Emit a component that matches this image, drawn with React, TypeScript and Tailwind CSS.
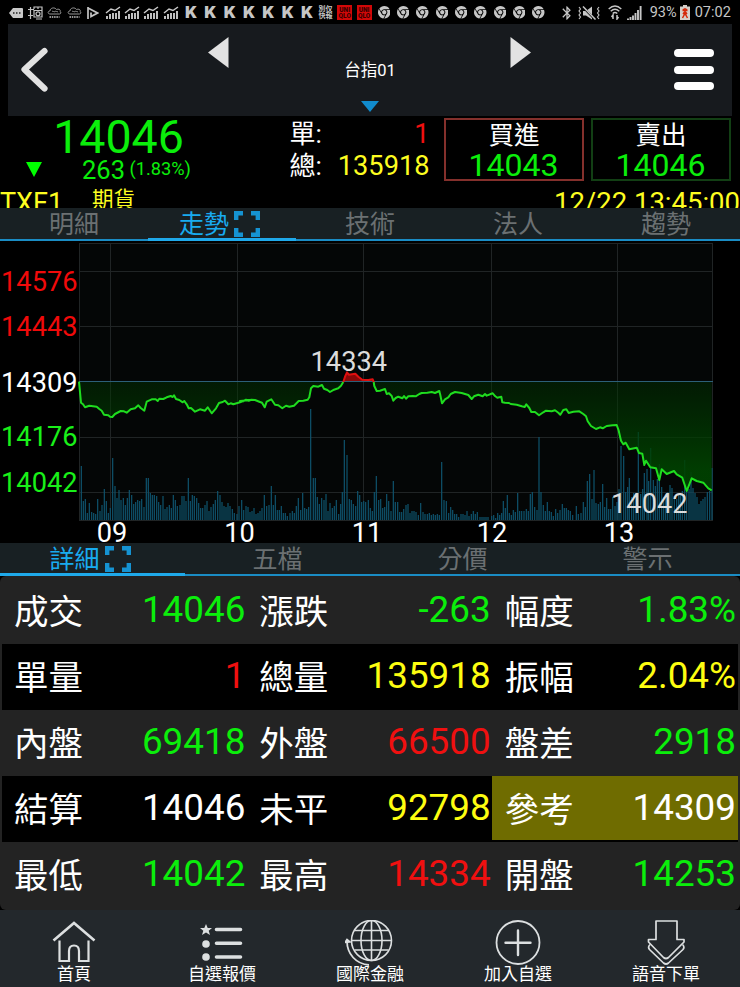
import React from "react";
import { FaChrome } from "react-icons/fa6";
import { MdBluetooth } from "react-icons/md";

type Pt = [number, number];

const FONT = "font-['Roboto','Noto_Sans_CJK_TC',sans-serif]";

/* Samples are recorded in thirds of a pixel, relative to a block origin. */
const scale = (ox: number, oy: number, pts: Pt[]): Pt[] =>
  pts.map(([x, y]) => [ox + x / 3, oy + y / 3]);

const priceMorning = scale(0, -1, [
  [237, 425], [243, 488], [249, 493], [255, 502], [268, 497], [290, 500], [298, 507], [305, 512], [312, 524], [325, 526],
  [330, 530], [337, 531], [345, 522], [362, 513], [372, 514], [380, 518], [392, 508], [405, 505], [415, 496],
  [422, 504], [433, 512], [440, 485], [455, 478], [467, 478], [473, 483], [478, 476], [490, 477], [500, 472],
  [512, 468], [518, 471], [522, 466], [528, 477], [538, 480], [548, 487], [553, 483], [560, 493], [566, 505],
  [573, 504], [585, 515], [600, 508], [615, 512], [623, 502], [635, 520], [648, 505], [657, 489], [668, 486],
  [675, 482], [685, 493], [692, 490], [700, 493], [710, 490], [720, 487], [735, 481], [750, 480],
]);
const priceMid = scale(240, 99, [
  [0, 183], [10, 184], [18, 179], [26, 182], [34, 179], [45, 180], [58, 185], [66, 188], [74, 202], [80, 185], [94, 178],
  [105, 194], [115, 196], [127, 205], [138, 197], [148, 200], [162, 197], [176, 183], [190, 182], [203, 179],
  [208, 172], [213, 145], [220, 138], [235, 140], [246, 135], [252, 146], [262, 150], [270, 156], [282, 149],
  [295, 145], [303, 137], [310, 126],
]);
const pricePeak = scale(240, 99, [
  [310, 126], [315, 110], [321, 97], [326, 104], [346, 101], [355, 110], [367, 119], [385, 120], [398, 118], [401, 126],
]);
const priceNoon = scale(240, 99, [
  [401, 126], [403, 138], [410, 153], [420, 152], [435, 147], [440, 162], [447, 160], [455, 168], [460, 182], [467, 174],
  [475, 170], [487, 175], [492, 168], [498, 176], [505, 169], [518, 168], [527, 169], [538, 162], [545, 159],
  [562, 158], [575, 156], [585, 159], [598, 153], [601, 165], [606, 190], [615, 178], [625, 172], [632, 162],
  [645, 156], [665, 159], [685, 165], [695, 177], [702, 169], [715, 164], [728, 169], [735, 162], [740, 167], [750, 163],
]);
const priceClose = scale(490, 99, [
  [8, 160], [16, 169], [22, 173], [34, 170], [37, 187], [45, 188], [57, 189], [62, 192], [80, 194], [95, 199],
  [104, 201], [109, 193], [118, 204], [124, 216], [135, 216], [147, 226], [160, 217], [168, 212], [185, 214],
  [195, 211], [205, 218], [211, 224], [220, 210], [229, 208], [236, 219], [250, 215], [268, 214], [280, 222],
  [288, 229], [293, 244], [303, 258], [318, 267], [330, 262], [338, 265], [350, 258], [368, 256], [380, 255],
  [386, 272], [393, 302], [400, 313], [407, 308], [418, 328], [440, 323], [447, 339], [457, 341], [463, 375],
  [468, 362], [481, 382], [498, 385], [508, 420], [515, 388], [530, 402], [552, 393], [560, 403], [577, 413],
  [590, 453], [605, 415], [620, 423], [640, 428], [655, 445], [665, 451],
]);

/* Volume: [x in thirds of a pixel, height in pixels] */
const volumes: [number, Pt[]][] = [
  [0, [
    [244, 53], [250, 18], [256, 20], [262, 6], [268, 16], [275, 7], [281, 6], [287, 5], [293, 20], [300, 8], [306, 14],
    [313, 30], [319, 18], [325, 6], [331, 11], [338, 61], [345, 33], [351, 21], [357, 29], [363, 19], [370, 21],
    [376, 14], [382, 21], [388, 29], [395, 24], [401, 15], [407, 17], [413, 19], [419, 18], [425, 20], [432, 12],
    [439, 41], [445, 41], [451, 26], [457, 24], [463, 24], [470, 23], [476, 17], [482, 14], [489, 23], [495, 10],
    [501, 12], [508, 14], [514, 11], [520, 24], [526, 19], [532, 13], [540, 14], [546, 23], [552, 23], [558, 18],
    [565, 41], [571, 18], [577, 24], [583, 23], [590, 21], [596, 16], [602, 11], [608, 11], [615, 14], [621, 18],
    [627, 8], [633, 12], [640, 15], [646, 19], [653, 28], [660, 24], [666, 17], [672, 13], [678, 12], [684, 16],
    [690, 13], [697, 10], [703, 6], [711, 5], [717, 13],
  ]],
  [240, [
    [5, 19], [11, 9], [18, 13], [24, 12], [30, 7], [36, 8], [42, 11], [48, 5], [54, 6], [60, 8], [66, 11], [73, 24],
    [80, 13], [87, 14], [94, 33], [100, 14], [106, 24], [112, 9], [118, 9], [124, 13], [130, 6], [136, 6], [142, 3],
    [150, 6], [157, 8], [163, 6], [169, 13], [175, 21], [182, 9], [188, 26], [194, 11], [200, 10], [206, 12],
    [212, 110], [220, 41], [226, 41], [232, 22], [238, 15], [245, 21], [252, 19], [258, 25], [264, 8], [270, 16],
    [277, 11], [283, 13], [289, 19], [296, 5], [302, 15], [307, 27], [313, 79], [321, 64], [328, 20], [334, 19],
    [340, 15], [347, 13], [353, 28], [359, 24], [365, 17], [371, 18], [377, 17], [385, 19], [391, 11], [397, 8],
    [403, 27], [409, 43], [416, 19], [422, 20], [428, 11], [434, 12], [440, 25], [446, 18], [453, 8], [460, 38],
    [466, 17], [473, 17], [479, 7], [485, 7], [491, 10], [498, 14], [504, 15], [510, 6], [516, 8], [522, 8],
    [528, 7], [535, 4], [542, 16], [549, 7], [555, 5], [562, 5], [568, 6], [574, 4], [580, 5], [586, 4], [592, 5],
    [598, 4], [605, 57], [612, 19], [619, 18], [626, 6], [632, 12], [638, 9], [644, 5], [650, 5], [656, 2],
    [663, 5], [669, 5], [675, 4], [681, 8], [687, 3], [694, 5], [700, 8], [706, 5], [712, 7], [720, 2], [726, 2],
    [732, 2], [738, 2], [744, 2],
  ]],
  [490, [
    [5, 3], [11, 4], [17, 1], [23, 6], [29, 4], [35, 6], [40, 18], [46, 11], [52, 24], [58, 6], [64, 4], [70, 9],
    [76, 7], [83, 26], [89, 8], [95, 8], [102, 8], [109, 10], [115, 8], [121, 25], [127, 27], [134, 12], [141, 9],
    [147, 82], [153, 27], [160, 14], [166, 8], [172, 17], [178, 8], [184, 7], [190, 3], [197, 10], [203, 6],
    [210, 9], [217, 15], [223, 11], [229, 11], [235, 9], [241, 8], [248, 4], [259, 13], [265, 5], [273, 6],
    [280, 17], [286, 12], [292, 38], [299, 45], [306, 20], [312, 49], [318, 16], [325, 15], [331, 17], [338, 35],
    [344, 12], [350, 21], [356, 10], [362, 10], [368, 22], [375, 13], [381, 17], [387, 30], [393, 73], [401, 63],
    [407, 27], [413, 32], [418, 41], [425, 22], [431, 26], [438, 22], [445, 87], [452, 25], [458, 30], [463, 46],
    [471, 50], [476, 38], [482, 71], [490, 39], [496, 33], [502, 40], [508, 55], [515, 32], [521, 22], [527, 25],
    [533, 27], [540, 34], [546, 31], [553, 23], [560, 20], [566, 25], [571, 26], [577, 28], [584, 59], [590, 35],
    [597, 30], [603, 47], [609, 31], [615, 26], [621, 22], [627, 15], [633, 18], [639, 20], [645, 22], [652, 27],
    [659, 28], [666, 51],
  ]],
];

const BASE = 140;
const toLine = (pts: Pt[]) => pts.map(([x, y]) => `${x.toFixed(1)},${y.toFixed(1)}`).join(" ");
const toArea = (pts: Pt[]) =>
  `${pts[0][0]},${BASE} ${toLine(pts)} ${pts[pts.length - 1][0]},${BASE}`;

const before = [...priceMorning, ...priceMid];
const after = [...priceNoon, ...priceClose];

function Chart() {
  return (
    <svg className={`block ${FONT}`} width="740" height="302" viewBox="0 0 740 302">
      <defs>
        <linearGradient id="fall" gradientUnits="userSpaceOnUse" x1="0" y1="140" x2="0" y2="230">
          <stop offset="0" stopColor="#003800" stopOpacity="0.4" />
          <stop offset="1" stopColor="#004200" stopOpacity="0.92" />
        </linearGradient>
      </defs>
      <rect x="79" y="2" width="634" height="277" fill="#040606" />
      <g stroke="#202425" strokeWidth="1">
        {[2.5, 30.5, 85.5, 196.5, 251.5, 279.5].map((y) => (
          <line key={y} x1="79" x2="713" y1={y} y2={y} />
        ))}
        {[79.5, 110.5, 237.5, 363.5, 491.5, 617.5, 712.5].map((x) => (
          <line key={x} x1={x} x2={x} y1="2" y2="279" />
        ))}
      </g>
      <g stroke="#0e5069" strokeWidth="1.25">
        {volumes.map(([ox, bars]) =>
          bars.map(([x, h]) => (
            <line key={`${ox}-${x}`} x1={ox + x / 3} x2={ox + x / 3} y1={279} y2={278 - h} />
          ))
        )}
      </g>
      <polygon points={toArea(before)} fill="url(#fall)" />
      <polygon points={toArea(after)} fill="url(#fall)" />
      <polygon points={toLine(pricePeak)} fill="#8a0808" />
      <line x1="79" x2="713" y1="140.5" y2="140.5" stroke="#2c5f78" />
      <g fill="none" strokeWidth="2" strokeLinejoin="round">
        <polyline points={toLine(before)} stroke="#1fdc1f" />
        <polyline points={toLine(after)} stroke="#1fdc1f" />
        <polyline points={toLine(pricePeak)} stroke="#e01010" />
      </g>
      <g fontSize="27.2" textAnchor="end">
        <text x="77.500" y="50" fill="#f00a0a">14576</text>
        <text x="77.500" y="95" fill="#f00a0a">14443</text>
        <text x="77.500" y="150.5" fill="#fff">14309</text>
        <text x="77.500" y="205" fill="#19f019">14176</text>
        <text x="77.500" y="250.5" fill="#19f019">14042</text>
        <text x="387" y="130" fill="#dcdcdc">14334</text>
        <text x="687.500" y="271.500" fill="#dcdcdc">14042</text>
      </g>
      <g fontSize="27.2" textAnchor="middle" fill="#fff">
        <text x="112" y="300.500">09</text>
        <text x="239.500" y="300.500">10</text>
        <text x="367" y="300.500">11</text>
        <text x="492" y="300.500">12</text>
        <text x="619" y="300.500">13</text>
      </g>
    </svg>
  );
}

function ExpandIcon() {
  return (
    <svg width="28" height="28" viewBox="0 0 28 28" fill="none" stroke="#1593d2" strokeWidth="4.4">
      <path d="M3.200 10V3.200H10M18 3.200h6.800V10M24.800 18v6.800H18M10 24.800H3.200V18" />
    </svg>
  );
}

function Tabs({ labels, active }: { labels: string[]; active: number }) {
  return (
    <div className="grid h-[33px] auto-cols-fr grid-flow-col border-b-2 border-[#1a8cc4] bg-[#182023]">
      {labels.map((label, i) => (
        <div
          key={label}
          className={`flex h-[33px] items-start justify-center text-[25px] leading-[33px] ${
            i === active ? "gap-[4px] border-b-[3px] border-[#1fa9ea] pr-[4px] text-[#18abf0]" : "text-[#6b7072]"
          }`}
        >
          <span>{label}</span>
          {i === active && (
            <span className="pt-[2px]">
              <ExpandIcon />
            </span>
          )}
        </div>
      ))}
    </div>
  );
}

function Slot({ children }: { children: React.ReactNode }) {
  return <div className="flex h-[24px] w-[19.330px] shrink-0 items-center justify-center">{children}</div>;
}

function Cloud() {
  return (
    <svg width="15" height="12" viewBox="0 0 15 12" fill="none" stroke="#969696" strokeWidth="1">
      <path d="M3 7C.5 7 .5 4 3 4c0-3.500 5-4 6.500-1.500C12 1.500 14 3 13 4.500c1.500.5 1 2.500-.5 2.500zM5 4.500c1-1 2 1 3 0s2 1 3 0" />
      <path d="M2.500 10h10" strokeDasharray="1.500 .8" strokeWidth="2" />
    </svg>
  );
}

function StatusBar() {
  return (
    <div className="flex h-[24px] items-center bg-black pt-[1px] pl-[6.500px] text-[#c6c6c6]">
      <Slot>
        <svg width="14" height="12" viewBox="0 0 14 12">
          <path d="M0 6 4 1h9q1 0 1 1v8q0 1-1 1H4z" fill="#c9c9c9" />
          <path d="M4 6h1.500M7 6h1.500M10 6h1.500" stroke="#222" strokeWidth="1.600" />
        </svg>
      </Slot>
      <Slot>
        <svg width="15" height="14" viewBox="0 0 15 14" fill="none" stroke="#c4c4c4" strokeWidth="1.200">
          <path d="M0 3.500h6M2.500 1v12M0 9.500h5M6 3V1h8v4M6 11h8V4.500H6zM10 1v2M8 13h6" />
          <circle cx="10" cy="7.800" r="2" />
        </svg>
      </Slot>
      <Slot><Cloud /></Slot>
      <Slot><Cloud /></Slot>
      <Slot>
        <svg width="12" height="12" viewBox="0 0 12 12" fill="none" stroke="#c4c4c4" strokeWidth="1.700">
          <path d="M1 0v12M1 1l9.500 5L4 9.500V5.500" />
        </svg>
      </Slot>
      {[0, 1, 2, 3].map((i) => (
        <Slot key={i}>
          <svg width="16" height="13" viewBox="0 0 16 13" fill="none" stroke="#c9c9c9">
            <path d="M1 7 6 3l4 1.500L15 1" strokeWidth="1.500" />
            <path d="M2 13v-3M5 13V8M8 13V7M11 13V7M14 13V5" strokeWidth="1.900" />
          </svg>
        </Slot>
      ))}
      {[0, 1, 2, 3, 4, 5, 6].map((i) => (
        <Slot key={i}>
          <span className="pl-[2px] font-['Inter',sans-serif] text-[16px] leading-[23px] font-black">K</span>
        </Slot>
      ))}
      <Slot>
        <span className="text-center text-[7px] leading-[7px] font-bold">別仅<br />快報</span>
      </Slot>
      {[0, 1].map((i) => (
        <Slot key={i}>
          <span className="flex h-[15px] w-[15px] flex-col items-center justify-center bg-[#d20808] text-[6.500px] leading-[6px] font-black text-[#3a0000]">
            <span>UNI</span>
            <span>QLO</span>
          </span>
        </Slot>
      ))}
      {[0, 1, 2, 3, 4, 5, 6, 7, 8].map((i) => (
        <Slot key={i}><FaChrome className="ml-[1px]" size={12.5} /></Slot>
      ))}
      <div className="ml-[11px] flex items-center">
        <MdBluetooth size={16} />
        <svg className="ml-[3px]" width="22" height="14" viewBox="0 0 22 14">
          <path d="M5 5h3l6-4.500v13L8 9.500H5z" fill="#c6c6c6" />
          <path d="M4 0l13 13.500" stroke="#000" strokeWidth="2.200" />
          <path d="M5 .5l12.500 13" stroke="#c6c6c6" strokeWidth="1.500" />
          <path d="M1 1l1.500 2L1 5l1.500 2L1 9l1.500 2L1 13M21 1l-1.500 2L21 5l-1.500 2L21 9l-1.500 2 1.500 2" fill="none" stroke="#c6c6c6" strokeWidth="1.100" />
        </svg>
        <svg className="ml-[8px]" width="14" height="15" viewBox="0 0 14 15" fill="none" stroke="#c6c6c6" strokeWidth="1.400">
          <path d="M.7 4Q7-2 13.300 4M2.700 6.300Q7 2.300 11.300 6.300M4.700 8.500Q7 6.500 9.300 8.500" />
          <path d="M5 14v-4l-1.500 2M9 10v4l1.500-2" strokeWidth="1.500" />
        </svg>
        <svg className="ml-[5px]" width="15" height="14" viewBox="0 0 15 14" stroke="#c6c6c6" strokeWidth="1.900">
          <path d="M1 14v-1.500M3.500 14v-3M6 14V9.500M8.500 14V7M11 14V4M13.600 14V0" />
        </svg>
        <span className="ml-[8px] w-[27.500px] text-[14.500px] leading-[25px]">93%</span>
        <svg className="ml-[3px]" width="10" height="15" viewBox="0 0 10 15">
          <path d="M3 0h4v1.500h3V15H0V1.500h3z" fill="#d6cfca" />
          <path d="M5 3v7M2.500 5.500h5M2.500 13 5 8.500 7.500 13M3 4l4 5M7 4 3 9" stroke="#d5280a" strokeWidth="1.500" fill="none" />
        </svg>
        <span className="ml-[4.500px] text-[14.500px] leading-[25px]">07:02</span>
      </div>
    </div>
  );
}

function Header() {
  return (
    <div className="mx-[8px] flex h-[92px] justify-between bg-[#171a1e] text-white">
      <div className="flex w-[240px] justify-between">
        <svg className="mt-[22px] ml-[12px]" width="30" height="48" viewBox="0 0 30 48" fill="none" stroke="#e2e2e2" strokeWidth="6.200" strokeLinecap="round" strokeLinejoin="round">
          <path d="M24.500 5 4.500 23.500 24.500 42.500" />
        </svg>
        <svg className="mt-[12px] mr-[19px]" width="21" height="33" viewBox="0 0 21 33">
          <path d="M0 16.500 20.500 1v31z" fill="#e2e2e2" />
        </svg>
      </div>
      <div className="flex flex-col items-center pt-[35px]">
        <span className="text-[16.500px] leading-[23px]">台指01</span>
        <svg className="mt-[19px]" width="18" height="11" viewBox="0 0 18 11">
          <path d="M0 0h18L9 11z" fill="#118bcd" />
        </svg>
      </div>
      <div className="flex w-[240px] justify-between">
        <svg className="mt-[12px] ml-[18px]" width="21" height="33" viewBox="0 0 21 33">
          <path d="M.5 1 21 16.500.5 32z" fill="#e2e2e2" />
        </svg>
        <div className="mt-[25px] mr-[18px] flex w-[40px] flex-col gap-[8.500px]">
          <div className="h-[8px] rounded-full bg-white" />
          <div className="h-[8px] rounded-full bg-white" />
          <div className="h-[8px] rounded-full bg-white" />
        </div>
      </div>
    </div>
  );
}

function Quote() {
  return (
    <div className="h-[92px] overflow-hidden bg-black">
      <div className="flex h-[67px]">
        <div className="w-[289.500px] text-[#0bee0b]">
          <div className="w-[237px] text-center text-[46.500px] leading-[43px]">14046</div>
          <div className="flex h-[24px] pl-[26px]">
            <svg className="mt-[3px]" width="16" height="15" viewBox="0 0 16 15">
              <path d="M0 0h16L8 15z" fill="#00ff00" />
            </svg>
            <span className="w-[83px] text-right text-[25.500px] leading-[23px]">263</span>
            <span className="ml-[4.500px] text-[18.200px] leading-[20px]">(1.83%)</span>
          </div>
        </div>
        <div className="w-[140px] pt-[2px] text-[26px] leading-[32px] text-white">
          <div className="flex justify-between">
            <span>單:</span>
            <span className="text-[27.200px] text-[#f01010]">1</span>
          </div>
          <div className="flex justify-between">
            <span>總:</span>
            <span className="text-[27.200px] text-[#fdfd20]">135918</span>
          </div>
        </div>
        <div className="mt-[2px] ml-[14.500px] flex h-[63px] w-[140px] flex-col items-center border-2 border-[#84302c] leading-[31px]">
          <span className="text-[25.500px] leading-[30px] text-white">買進</span>
          <span className="pr-[1px] text-[32px] text-[#0bee0b]">14043</span>
        </div>
        <div className="mt-[2px] ml-[7px] flex h-[63px] w-[140px] flex-col items-center border-2 border-[#123f14] leading-[31px]">
          <span className="text-[25.500px] leading-[30px] text-white">賣出</span>
          <span className="pr-[1px] text-[32px] text-[#0bee0b]">14046</span>
        </div>
      </div>
      <div className="flex h-[25px] overflow-hidden text-[27px] leading-[40px] text-[#fdfd20]">
        <span className="w-[92px]">TXF1</span>
        <span className="text-[21.500px] leading-[34px]">期貨</span>
        <span className="ml-auto text-[27.500px]">12/22 13:45:00</span>
      </div>
    </div>
  );
}

const G = "text-[#0bee0b]";
const R = "text-[#f01010]";
const Y = "text-[#fdfd10]";
const W = "text-white";

const rows: [string, string, string][][] = [
  [["成交", "14046", G], ["漲跌", "-263", G], ["幅度", "1.83%", G]],
  [["單量", "1", R], ["總量", "135918", Y], ["振幅", "2.04%", Y]],
  [["內盤", "69418", G], ["外盤", "66500", R], ["盤差", "2918", G]],
  [["結算", "14046", W], ["未平", "92798", Y], ["參考", "14309", W]],
  [["最低", "14042", G], ["最高", "14334", R], ["開盤", "14253", G]],
];

function Details() {
  return (
    <div className="h-[334px] bg-black">
      <div className="h-[334px] rounded-[6px] bg-[#232323] px-[2px] pt-[2px]">
        {rows.map((row, i) => (
          <div key={i} className={`flex h-[66.100px] ${i % 2 ? "bg-black" : "bg-[#232323]"}`}>
            {row.map(([label, value, color]) => (
              <div
                key={label}
                className={`flex h-[64px] flex-1 justify-between pr-[2px] pl-[12px] ${label === "參考" ? "-ml-px bg-[#6f6c00] pl-[13px]" : ""}`}
              >
                <span className="text-[34.500px] leading-[68px] text-white">{label}</span>
                <span className={`text-[36.800px] leading-[63px] ${color}`}>{value}</span>
              </div>
            ))}
          </div>
        ))}
      </div>
    </div>
  );
}

const navItems: { label: string; icon: React.ReactNode }[] = [
  {
    label: "首頁",
    icon: (
      <svg width="44" height="46" viewBox="0 0 44 46" fill="none" stroke="#dcdfe0" strokeWidth="2.600">
        <path d="M1.500 20.500 22 3l20.500 17.500" />
        <path d="M7.500 20.500V41h9.500V31Q17 25.500 22 25.500T27 31V41h9.500V20.500" strokeWidth="2.200" />
      </svg>
    ),
  },
  {
    label: "自選報價",
    icon: (
      <svg width="44" height="46" viewBox="0 0 44 46" fill="#dcdfe0">
        <path d="M6 4l1.700 4h4.300L8.700 10.800 10 15 6 12.500 2 15l1.300-4.200L0 8h4.300z" />
        <circle cx="6" cy="24" r="3.800" />
        <circle cx="6" cy="37" r="3.800" />
        <path d="M16.500 9.500h24M16.500 23.300h24M16.500 37h24" stroke="#dcdfe0" strokeWidth="3.600" strokeLinecap="round" />
      </svg>
    ),
  },
  {
    label: "國際金融",
    icon: (
      <svg width="50" height="46" viewBox="0 0 50 46" fill="none" stroke="#dcdfe0" strokeWidth="1.600">
        <circle cx="26.500" cy="20.500" r="20" />
        <ellipse cx="26.500" cy="20.500" rx="10.500" ry="20" />
        <path d="M26.500.5v40M6.500 20.500h40M9.500 10.500h34M9.500 30h34" />
        <path d="M2 21C2 34 11 44 24 45" strokeWidth="1.800" />
        <path d="M0 22.500 2 19.500l3 2.500z" fill="#dcdfe0" />
      </svg>
    ),
  },
  {
    label: "加入自選",
    icon: (
      <svg width="46" height="46" viewBox="0 0 46 46" fill="none" stroke="#dcdfe0">
        <circle cx="23" cy="22.500" r="21.500" strokeWidth="1.800" />
        <path d="M23 10.500v24.500M10.500 22.700h25" strokeWidth="2.400" strokeLinecap="round" />
      </svg>
    ),
  },
  {
    label: "語音下單",
    icon: (
      <svg width="38" height="46" viewBox="0 0 38 46" fill="none" stroke="#dcdfe0" strokeWidth="1.700" strokeLinejoin="round">
        <path d="M9 1h21v18.500h7L37 22 21.500 37.500Q19 39.500 16.500 37.500L1.500 22v-2.500H9z" />
        <path d="M3 24.500Q.5 27 2.500 29.500L16.500 43Q19 45 21.500 43L36 29.500Q38 27 35.500 24.500" />
      </svg>
    ),
  },
];

function BottomNav() {
  return (
    <div className="flex h-[77px] bg-[#23282c]">
      {navItems.map(({ label, icon }) => (
        <div key={label} className="flex flex-1 flex-col items-center pt-[10px] text-[17px] leading-[20px] text-white">
          <div className="h-[44px]">{icon}</div>
          <span>{label}</span>
        </div>
      ))}
    </div>
  );
}

export default function App() {
  return (
    <div className={`h-[987px] w-[740px] overflow-hidden bg-black ${FONT}`}>
      <StatusBar />
      <Header />
      <Quote />
      <Tabs labels={["明細", "走勢", "技術", "法人", "趨勢"]} active={1} />
      <Chart />
      <Tabs labels={["詳細", "五檔", "分價", "警示"]} active={0} />
      <Details />
      <BottomNav />
    </div>
  );
}
